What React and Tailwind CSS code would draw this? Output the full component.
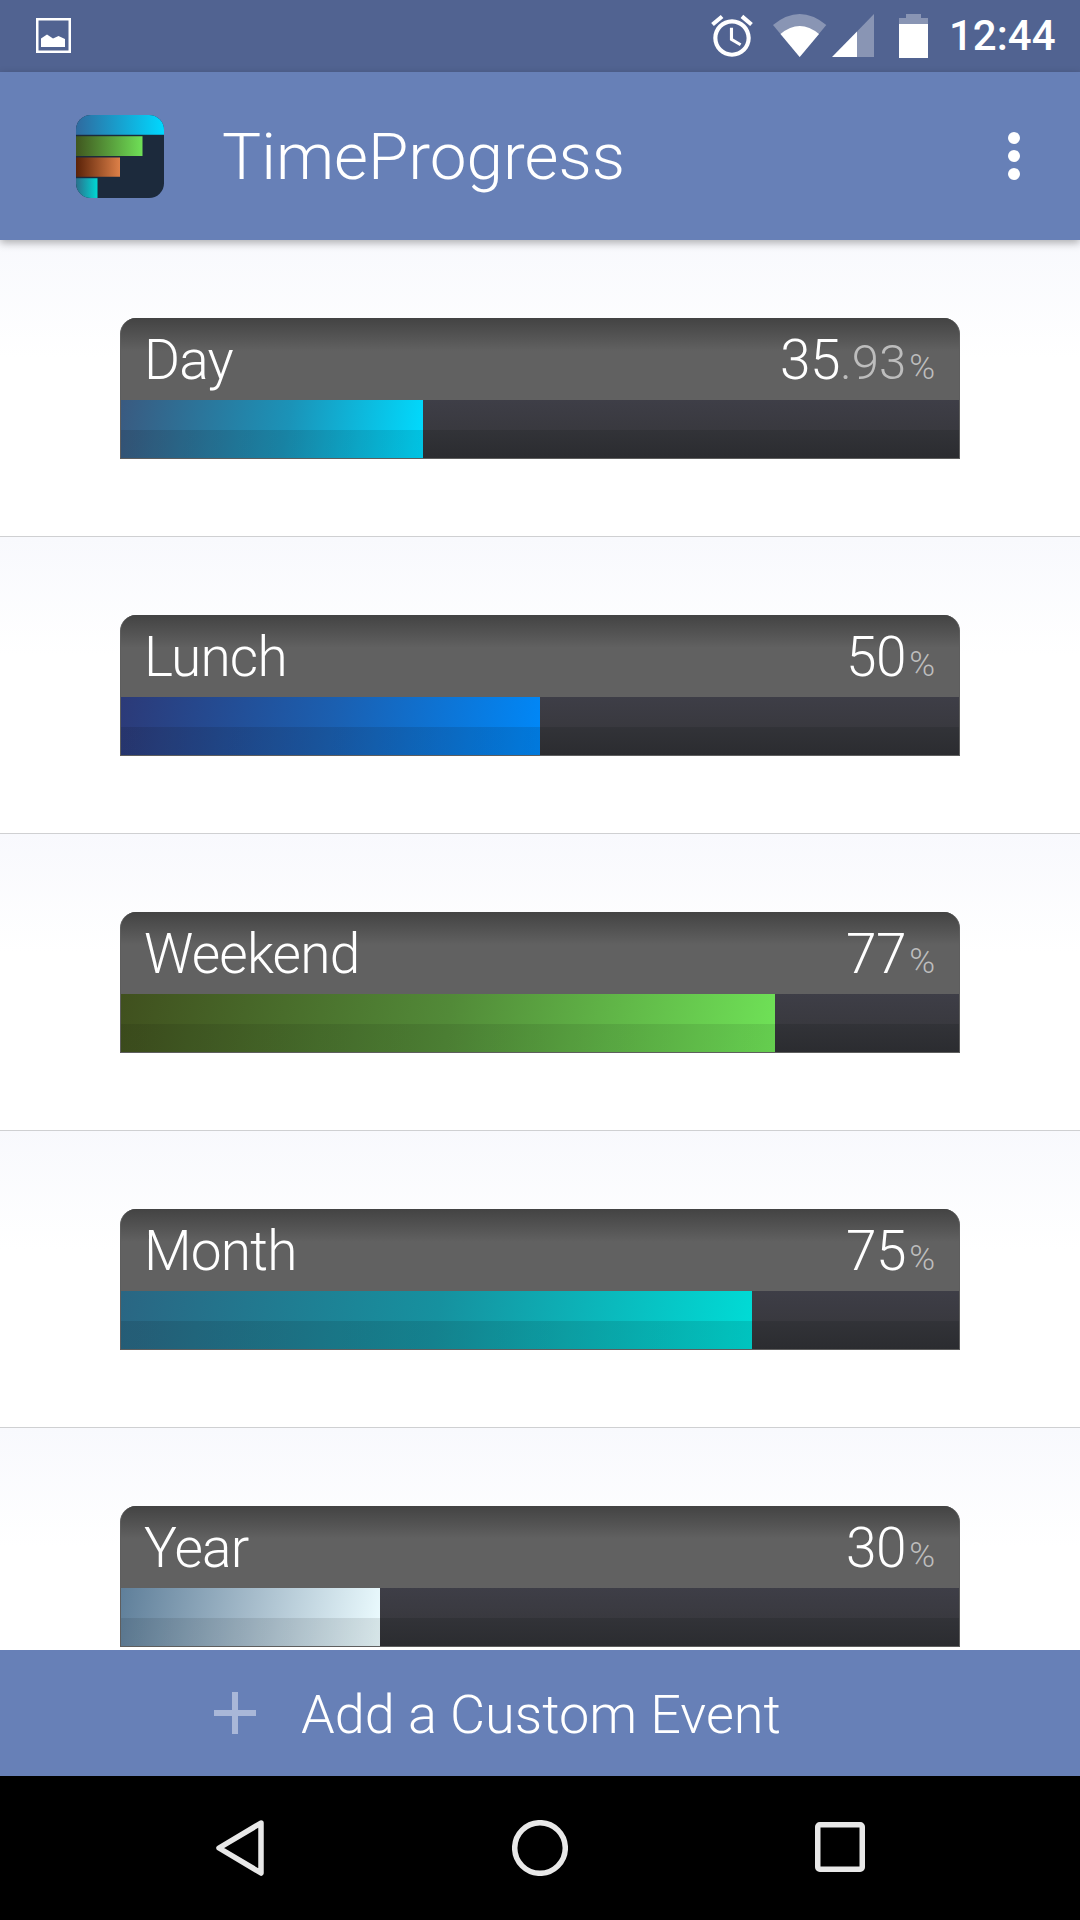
import React from "react";

const rows = [
  { name: "Day", whole: "35", frac: ".93", fill: "w-[302px] bg-[linear-gradient(transparent_51%,rgba(0,0,0,0.11)_51%),linear-gradient(100deg,#3a5a80,#1b93b8_55%,#00dcff)]" },
  { name: "Lunch", whole: "50", fill: "w-[419px] bg-[linear-gradient(transparent_51%,rgba(0,0,0,0.11)_51%),linear-gradient(100deg,#2c3a78,#1b5fb0_50%,#0088f8)]" },
  { name: "Weekend", whole: "77", fill: "w-[654px] bg-[linear-gradient(transparent_51%,rgba(0,0,0,0.09)_51%),linear-gradient(100deg,#40501e,#528a38_50%,#6fe257)]" },
  { name: "Month", whole: "75", fill: "w-[631px] bg-[linear-gradient(transparent_51%,rgba(0,0,0,0.11)_51%),linear-gradient(100deg,#2a6683,#16919f_50%,#00dcd6)]" },
  { name: "Year", whole: "30", fill: "w-[259px] bg-[linear-gradient(transparent_51%,rgba(0,0,0,0.09)_51%),linear-gradient(100deg,#5f7f9a,#a6bccb_50%,#ecfcff)]" },
];

function Row({ row, last }) {
  return (
    <div className={`flex-none h-[297px] pt-[78px] px-[120px] bg-linear-to-b from-[#f8f9fd] to-white to-40% ${last ? "" : "border-b border-[#cfd0d2]"}`}>
      <div className="h-[141px] rounded-t-[16px] overflow-hidden flex flex-col bg-[#5f5f5f] border-x border-b border-[#5e5e5e]">
        <div className="h-[82px] flex-none flex justify-between pl-[24px] pr-[25px] pt-[9px] -mx-px bg-linear-to-b from-[#434343] to-[#616161] to-40% text-white">
          <span className="text-[55px] leading-[66px] tracking-[-0.8px]">{row.name}</span>
          <span className="leading-[66px] whitespace-nowrap">
            <span className="text-[55px] tracking-[-0.5px]">{row.whole}</span>
            {row.frac && <span className="text-[49px] text-[#bdbdbd]">{row.frac}</span>}
            <span className="text-[35px] text-[#bdbdbd] ml-[3px]">%</span>
          </span>
        </div>
        <div className="flex-1 flex bg-[linear-gradient(#3e3e47,#39393f_51%,#323338_51%,#2b2c30)]">
          <div className={`h-full flex-none ${row.fill}`} />
        </div>
      </div>
    </div>
  );
}

export default function App() {
  return (
    <div className="w-[1080px] h-[1920px] flex flex-col overflow-hidden bg-white font-[Roboto,sans-serif] font-light">
      {/* status bar */}
      <div className="flex-none h-[72px] bg-[#516391] flex items-start text-white">
        <svg className="flex-none ml-[36px] mt-[18px]" width="35" height="35" viewBox="0 0 35 35">
          <rect x="1.25" y="1.25" width="32.5" height="32.5" fill="none" stroke="#fff" strokeWidth="2.5" />
          <path d="M5 29V20.5L11 16.5L17 20.5L22.5 18L29 21V29Z" fill="#fff" />
        </svg>
        <svg className="flex-none ml-[636px] mt-[11px]" width="50" height="50" viewBox="0 0 24 24" fill="#fff">
          <path d="M22 5.72l-4.6-3.86-1.29 1.53 4.6 3.86L22 5.72zM7.88 3.39L6.6 1.86 2 5.71l1.29 1.53 4.59-3.85zM12.5 8H11v6l4.75 2.85.75-1.23-4-2.37V8zM12 4c-4.97 0-9 4.03-9 9s4.03 9 9 9 9-4.03 9-9-4.03-9-9-9zm0 16c-3.87 0-7-3.13-7-7s3.13-7 7-7 7 3.13 7 7-3.13 7-7 7z" />
        </svg>
        <svg className="flex-none ml-[16px] mt-[14px]" width="54" height="43" viewBox="0 0 54 43">
          <path d="M0 11Q26.7 -11 53.3 11L26.7 43Z" fill="#fff" fillOpacity="0.32" />
          <path d="M7.5 20Q26.7 4 46 20L26.7 43Z" fill="#fff" />
        </svg>
        <svg className="flex-none ml-[5px] mt-[14px]" width="42" height="43" viewBox="0 0 42 43">
          <path d="M25 17.5L42 0V43H25Z" fill="#fff" fillOpacity="0.32" />
          <path d="M0 43L25 17.5V43Z" fill="#fff" />
        </svg>
        <svg className="flex-none ml-[25px] mt-[14px]" width="29" height="44" viewBox="0 0 29 44">
          <path d="M7 0H22V4H29V10H0V4H7Z" fill="#fff" fillOpacity="0.32" />
          <path d="M0 10H29V44H0Z" fill="#fff" />
        </svg>
        <span className="flex-none ml-[21px] text-[42px] leading-[72px] font-medium">12:44</span>
      </div>

      {/* toolbar */}
      <div className="relative z-10 flex-none h-[168px] bg-[#6780b7] shadow-[0_3px_8px_rgba(0,0,0,0.3)] flex items-center text-white">
        <svg className="flex-none ml-[76px] mt-[1px]" width="88" height="83" viewBox="0 0 88 84" preserveAspectRatio="none">
          <defs>
            <clipPath id="logoClip"><rect width="88" height="84" rx="15" /></clipPath>
            <linearGradient id="lgBlue"><stop offset="0" stopColor="#2f6a9f" /><stop offset="1" stopColor="#00d8ff" /></linearGradient>
            <linearGradient id="lgGreen"><stop offset="0" stopColor="#40561f" /><stop offset="1" stopColor="#6fe057" /></linearGradient>
            <linearGradient id="lgOrange"><stop offset="0" stopColor="#5a2208" /><stop offset="1" stopColor="#dd8048" /></linearGradient>
            <linearGradient id="lgTeal"><stop offset="0" stopColor="#2a6f8c" /><stop offset="1" stopColor="#00d8d4" /></linearGradient>
          </defs>
          <g clipPath="url(#logoClip)">
            <rect width="88" height="84" fill="#1c2a3c" />
            <rect width="88" height="20" fill="url(#lgBlue)" />
            <rect y="21.5" width="66.5" height="20" fill="url(#lgGreen)" />
            <rect y="43" width="44" height="19.5" fill="url(#lgOrange)" />
            <rect y="64" width="21.5" height="20" fill="url(#lgTeal)" />
          </g>
        </svg>
        <span className="flex-none ml-[58px] mt-[1px] text-[65.6px] leading-none">TimeProgress</span>
        <div className="flex-none ml-auto mr-[60px] flex flex-col gap-[6px]">
          <span className="w-[12px] h-[12px] rounded-full bg-white" />
          <span className="w-[12px] h-[12px] rounded-full bg-white" />
          <span className="w-[12px] h-[12px] rounded-full bg-white" />
        </div>
      </div>

      {/* list */}
      <div className="flex-1 min-h-0 overflow-hidden flex flex-col">
        {rows.map((r, i) => (
          <Row key={r.name} row={r} last={i === rows.length - 1} />
        ))}
      </div>

      {/* add bar */}
      <div className="flex-none h-[126px] bg-[#6780b7] flex items-center text-white">
        <svg className="flex-none ml-[214px]" width="42" height="42" viewBox="0 0 42 42">
          <path d="M18 0H24V18H42V24H24V42H18V24H0V18H18Z" fill="#a9b7d8" />
        </svg>
        <span className="flex-none ml-[45px] mt-[4px] text-[54px] leading-none">Add a Custom Event</span>
      </div>

      {/* nav bar */}
      <div className="flex-none h-[144px] bg-black flex items-start">
        <svg className="flex-none ml-[216px] mt-[44px]" width="48" height="56" viewBox="0 0 48 56">
          <path d="M45 3L3 28L45 53Z" fill="none" stroke="#e8e8e8" strokeWidth="5.5" strokeLinejoin="round" />
        </svg>
        <svg className="flex-none ml-[248px] mt-[44px]" width="56" height="56" viewBox="0 0 56 56">
          <circle cx="28" cy="28" r="25.3" fill="none" stroke="#e8e8e8" strokeWidth="5.5" />
        </svg>
        <svg className="flex-none ml-[247px] mt-[46px]" width="50" height="50" viewBox="0 0 50 50">
          <rect x="2.75" y="2.75" width="44.5" height="44.5" rx="2" fill="none" stroke="#e8e8e8" strokeWidth="5.5" />
        </svg>
      </div>
    </div>
  );
}
